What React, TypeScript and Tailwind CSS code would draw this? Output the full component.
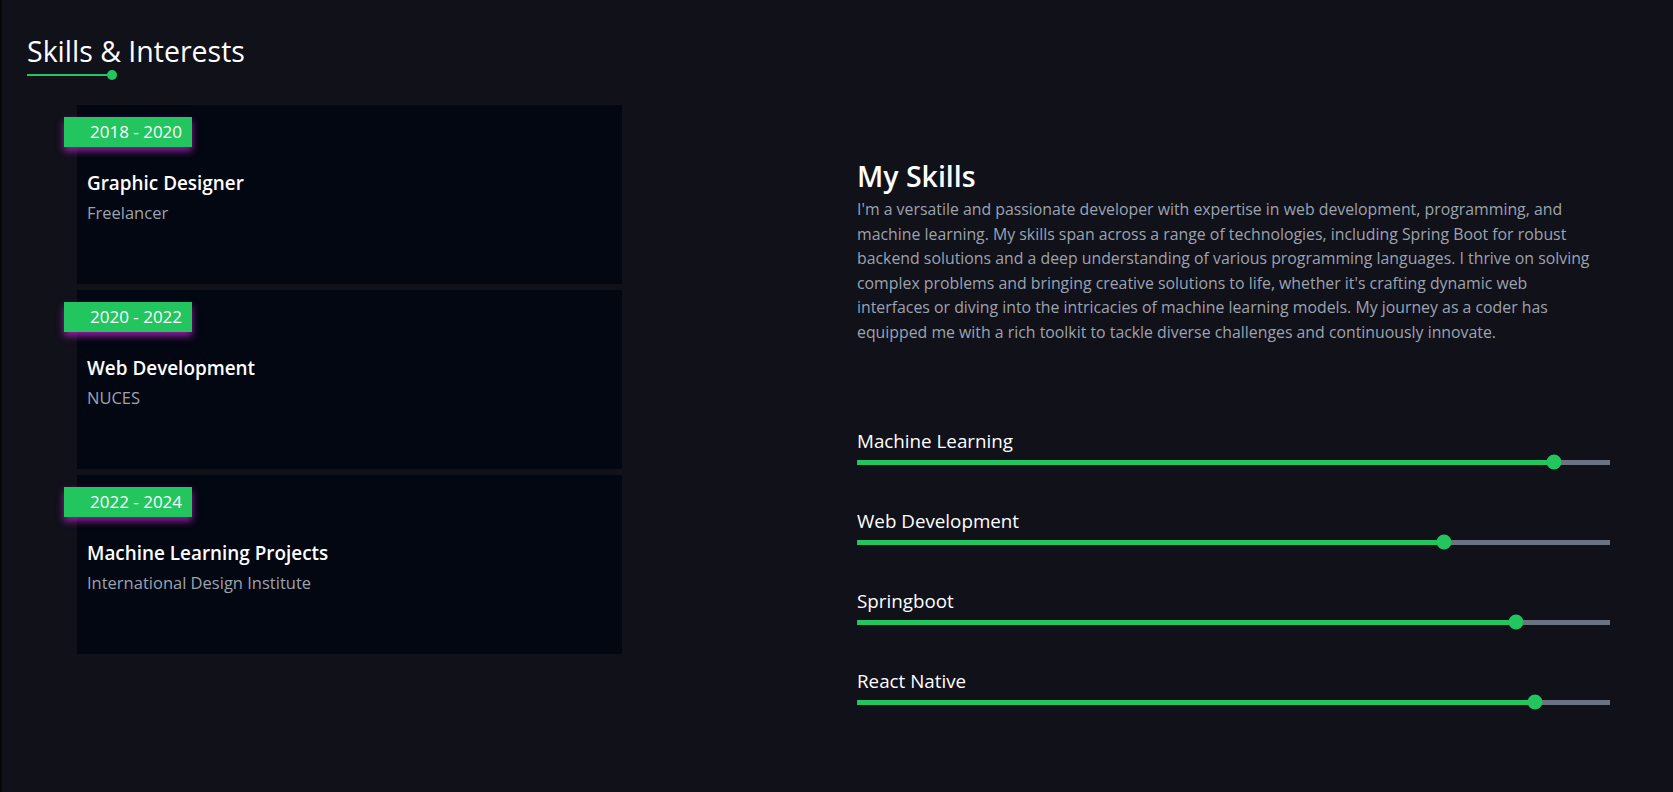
import React from "react";

const timeline = [
  { years: "2018 - 2020", title: "Graphic Designer", place: "Freelancer" },
  { years: "2020 - 2022", title: "Web Development", place: "NUCES" },
  { years: "2022 - 2024", title: "Machine Learning Projects", place: "International Design Institute" },
];

const skills = [
  { name: "Machine Learning", level: 92.6 },
  { name: "Web Development", level: 78 },
  { name: "Springboot", level: 87.5 },
  { name: "React Native", level: 90 },
];

// paragraph lines, broken the way the design wraps them
const about = [
  "I'm a versatile and passionate developer with expertise in web development, programming, and",
  "machine learning. My skills span across a range of technologies, including Spring Boot for robust",
  "backend solutions and a deep understanding of various programming languages. I thrive on solving",
  "complex problems and bringing creative solutions to life, whether it's crafting dynamic web",
  "interfaces or diving into the intricacies of machine learning models. My journey as a coder has",
  "equipped me with a rich toolkit to tackle diverse challenges and continuously innovate.",
];

const App = () => {
  return (
    <div className="min-h-screen h-[792px] bg-[#11111a] border-l-2 border-[#08080b] text-white font-['Open_Sans',sans-serif] overflow-hidden">
      <div className="flex">
        {/* Left: title + timeline */}
        <div className="w-[855px] shrink-0 pl-[25px] pt-[33px]">
          <h2 className="text-[28.5px] leading-[36px] font-normal">Skills &amp; Interests</h2>
          <div className="flex items-center mt-[1px]">
            <div className="h-[2px] w-[82px] bg-[#22c55e]" />
            <div className="w-[10px] h-[10px] rounded-full bg-[#22c55e] -ml-[2px]" />
          </div>

          <div className="ml-[50px] mt-[25px] w-[545px] flex flex-col gap-[6px]">
            {timeline.map((item) => (
              <div key={item.years} className="h-[179px] bg-[#030712] pl-[10px] pt-[12px]">
                <div className="inline-block -ml-[23px] h-[30px] w-[128px] bg-[#22c55e] pl-[26px] pr-[8px] text-[17px] leading-[30px] text-white shadow-[0_4px_7px_rgba(192,38,211,0.75)]">
                  {item.years}
                </div>
                <h3 className="mt-[23px] text-[18.9px] leading-[26px] font-semibold">{item.title}</h3>
                <p className="mt-[5px] text-[16.5px] leading-[24px] text-[#9ca3af]">{item.place}</p>
              </div>
            ))}
          </div>
        </div>

        {/* Right: about + skill bars */}
        <div className="pt-[158px] w-[790px] shrink-0">
          <h2 className="text-[28.5px] leading-[36px] font-semibold">My Skills</h2>
          <p className="mt-[3px] text-[15.85px] leading-[24.6px] text-[#9ca3af]">
            {about.map((line) => (
              <span key={line} className="block whitespace-nowrap">
                {line}
              </span>
            ))}
          </p>

          <div className="mt-[84px] w-[753px] flex flex-col gap-[44px]">
            {skills.map((s) => (
              <div key={s.name}>
                <div className="text-[18.8px] leading-[24px]">{s.name}</div>
                <div className="relative mt-[7px] h-[5px] bg-[#6b7280]">
                  <div className="h-full bg-[#22c55e]" style={{ width: `${s.level}%` }} />
                  <div
                    className="absolute top-1/2 w-[15px] h-[15px] -translate-x-1/2 -translate-y-1/2 rounded-full bg-[#22c55e]"
                    style={{ left: `${s.level}%` }}
                  />
                </div>
              </div>
            ))}
          </div>
        </div>
      </div>
    </div>
  );
};

export default App;
